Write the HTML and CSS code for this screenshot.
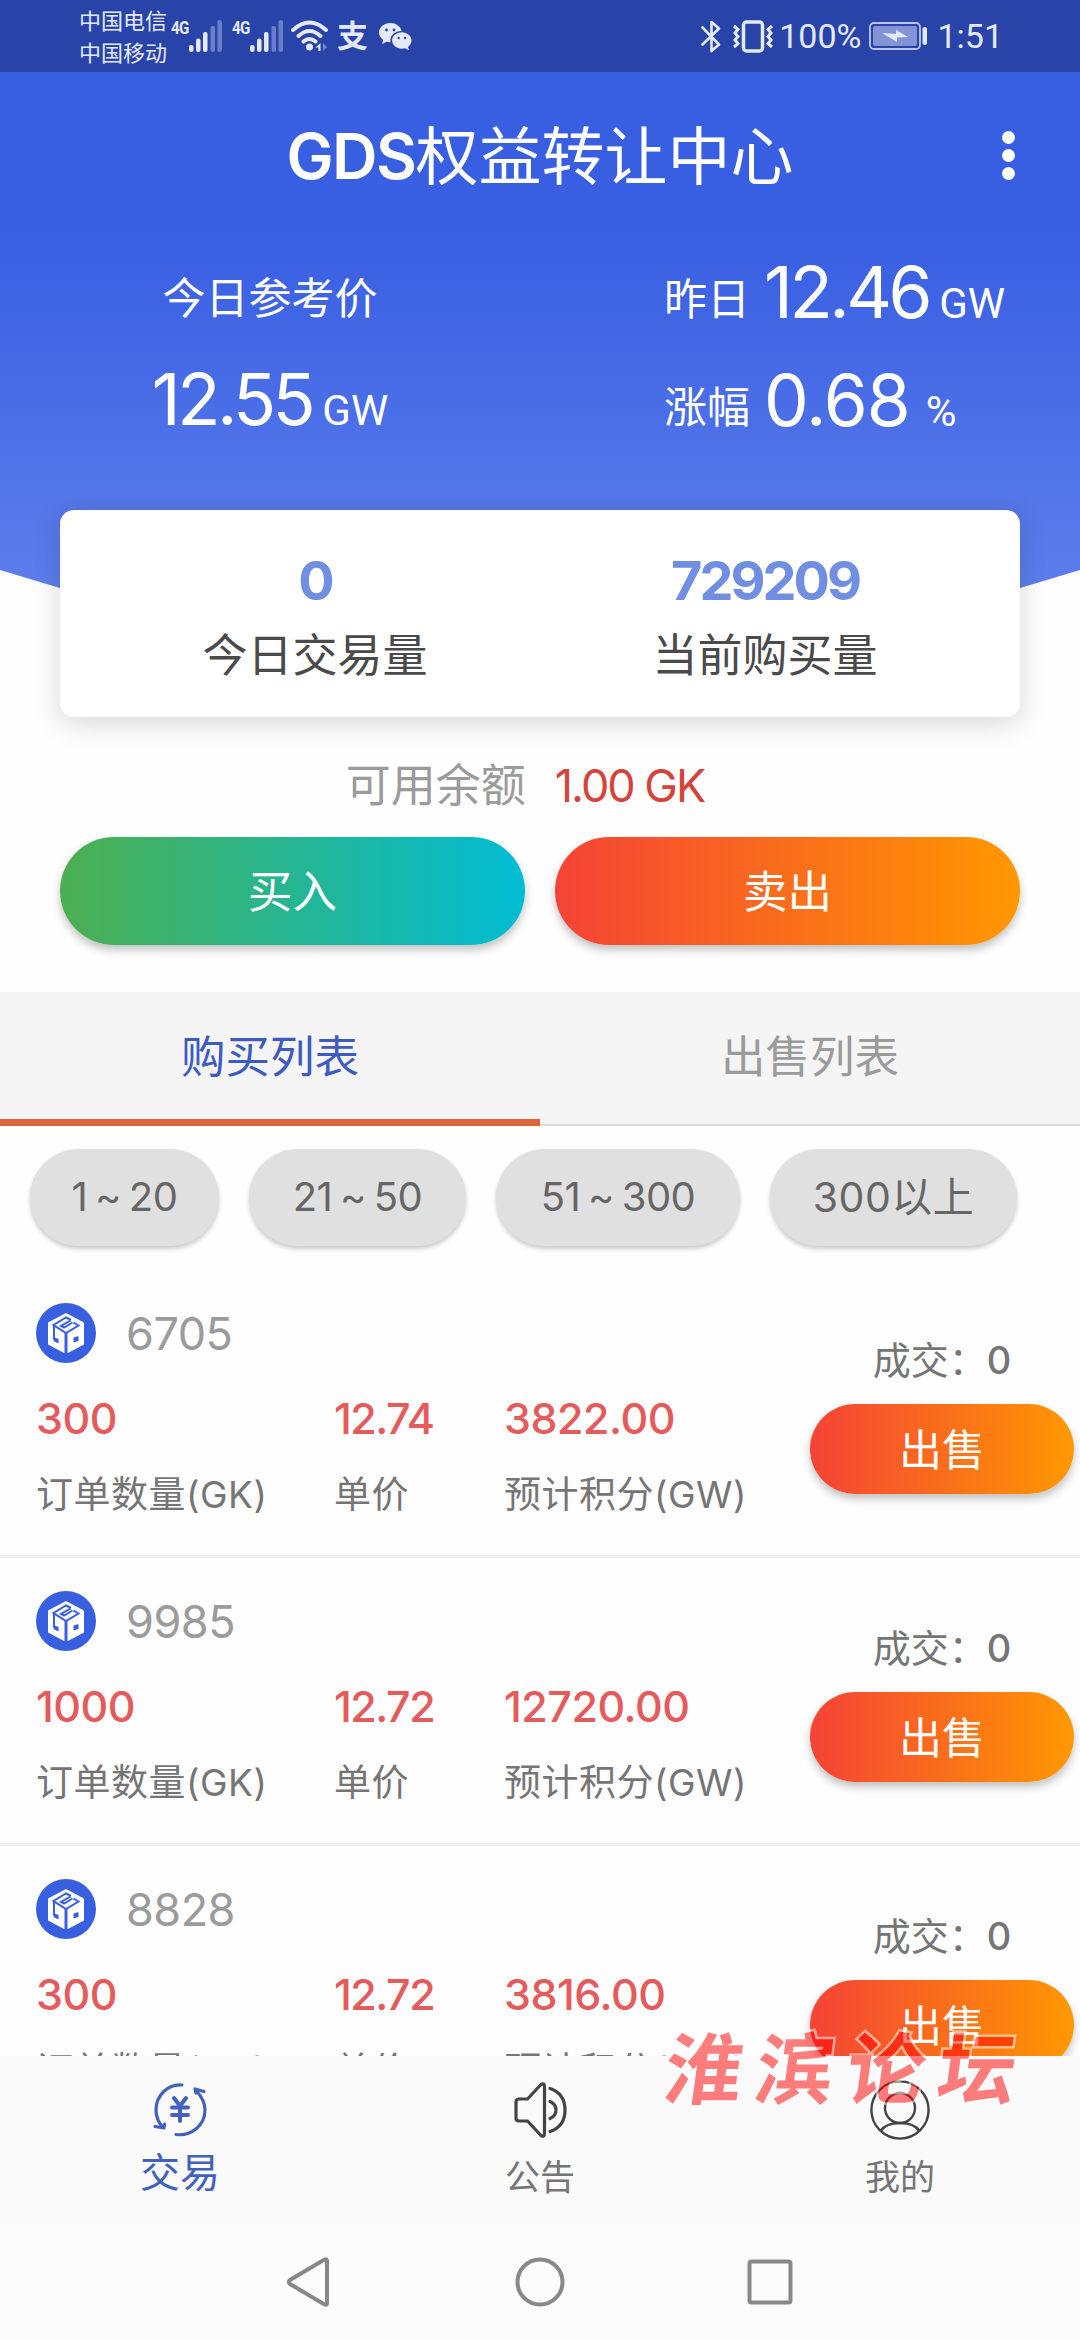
FILE: index.html
```html
<!DOCTYPE html>
<html lang="zh-CN">
  <head>
    <meta charset="UTF-8" />
    <meta name="viewport" content="width=device-width, initial-scale=1.0" />
    <title>GDS权益转让中心</title>
    <link rel="stylesheet" href="styles.css">
  </head>
  <body>
    <!-- shared icons -->
    <svg class="sprite" width="0" height="0">
      <symbol id="signal" viewBox="0 0 34 32">
        <rect x="0" y="25" width="4.500" height="7" rx="2" />
        <rect x="7" y="18.500" width="4.500" height="13.500" rx="2" />
        <rect x="14" y="12" width="4.500" height="20" rx="2" />
        <rect x="21.500" y="6" width="4.500" height="26" rx="2" opacity=".35" />
        <rect x="28.500" y="0" width="4.500" height="32" rx="2" opacity=".35" />
      </symbol>
      <symbol id="logo" viewBox="0 0 60 60">
        <circle cx="30" cy="30" r="30" fill="#375fe0" />
        <path d="M30 10l18 9.500v22L30 51l-18-9.500v-22z" fill="#fff" />
        <g fill="none" stroke="#375fe0" stroke-width="2">
          <path d="M35 17L30 14.500l-12.500 7.500 12.500 8 12.500-7.500-5-3" />
          <path d="M34.500 17.500l-9.500 5.500 3 1.500 8.500-5" />
          <path d="M18 22v14" />
        </g>
        <path d="M28.500 30h3v22h-3zM17.500 34l5 2v4.500l-5-2.500zM37.500 34.500l5-1.500v5l-5 1.500z" fill="#375fe0" />
      </symbol>
    </svg>

    <header class="hero">
      <div class="status">
        <div class="carrier"><span>中国电信</span><span>中国移动</span></div>
        <div class="sim"><b>4G</b><svg width="34" height="32"><use href="#signal" /></svg></div>
        <div class="sim"><b>4G</b><svg width="34" height="32"><use href="#signal" /></svg></div>
        <svg class="wifi" width="37" height="32" viewBox="0 0 37 32">
          <g fill="none" stroke="#e4e9fb" stroke-width="4" stroke-linecap="round">
            <path d="M2 10q16.500-15 33 0M7.500 16q11-10 22 0M12.500 21.500q6-5 12 0" />
          </g>
          <circle cx="18.500" cy="27" r="3.500" />
          <path d="M29.500 23v8h-2v-3.500h-3z" />
          <path d="M32 23v8l4-4z" opacity=".4" />
        </svg>
        <span class="pay">支</span>
        <svg class="wechat" width="33" height="28" viewBox="0 0 33 28">
          <path d="M11.500 0C5 0 0 4.300 0 9.600c0 3 1.600 5.500 4.200 7.300L3 21l4.600-2.300c1.200.3 2.500.5 3.900.5C10.500 12.500 16 8 22.700 8 21.500 3.300 17 0 11.500 0z" />
          <path d="M32.500 17.500c0-4.600-4.400-8.200-9.700-8.200s-9.700 3.600-9.700 8.200 4.400 8.200 9.700 8.200c1.200 0 2.300-.2 3.400-.5l3.800 2-1-3.300c2.200-1.600 3.500-3.800 3.500-6.400z" />
          <g fill="#2944a9"><circle cx="7.500" cy="7" r="1.400" /><circle cx="15" cy="7" r="1.400" /><circle cx="19.700" cy="15" r="1.200" /><circle cx="26" cy="15" r="1.200" /></g>
        </svg>
        <div class="status-right">
          <svg width="20" height="33" viewBox="0 0 20 33" fill="none" stroke="#e4e9fb" stroke-width="2.600" stroke-linejoin="round" stroke-linecap="round">
            <path d="M1.500 7.500l16.500 17-7.500 6.500V2l7.500 6.500-16.500 16" />
          </svg>
          <svg class="vibrate" width="42" height="33" viewBox="0 0 42 33" fill="none" stroke="#e4e9fb" stroke-width="3">
            <rect x="11.500" y="2" width="19" height="29" rx="3" stroke-width="3.500" />
            <path d="M2 6l4 3.500-3 3.500 3 3.500-3 3.500 3 3.500-4 3.500M40 6l-4 3.500 3 3.500-3 3.500 3 3.500-3 3.500 4 3.500" />
          </svg>
          <span class="percent">100%</span>
          <svg class="battery" width="58" height="28" viewBox="0 0 58 28">
            <rect x="1" y="1" width="50" height="26" rx="4" fill="none" stroke="#b9c5f2" stroke-width="1.800" />
            <rect x="4" y="4" width="44" height="20" rx="2" fill="#8294d6" />
            <path d="M13 11l14 1V8l12 7-11 .500V20z" />
            <rect x="53.500" y="5" width="4.500" height="18" rx="2" />
          </svg>
          <span>1:51</span>
        </div>
      </div>

      <div class="appbar">
        <h1><b>GDS</b>权益转让中心</h1>
        <div class="more"><i></i><i></i><i></i></div>
      </div>

      <div class="prices">
        <div class="price-left">今日参考价</div>
        <div><em>昨日</em> <strong>12.46</strong> <small>GW</small></div>
        <div class="price-left today"><strong>12.55</strong> <small>GW</small></div>
        <div><em>涨幅</em> <strong class="rate">0.68</strong> <small>%</small></div>
      </div>

      <div class="card">
        <div><b>0</b><span>今日交易量</span></div>
        <div><b>729209</b><span>当前购买量</span></div>
      </div>
    </header>

    <div class="balance"><span>可用余额</span><b>1.00 GK</b></div>

    <div class="actions">
      <a class="btn buy">买入</a>
      <a class="btn sell">卖出</a>
    </div>

    <nav class="tabs">
      <a class="active">购买列表</a>
      <a>出售列表</a>
    </nav>

    <div class="chips">
      <a>1 ~ 20</a>
      <a>21 ~ 50</a>
      <a>51 ~ 300</a>
      <a class="wide">300以上</a>
    </div>

    <main class="orders">
      <section class="order">
        <div class="info">
          <div class="user"><svg width="60" height="60"><use href="#logo" /></svg>6705</div>
          <div class="cells">
            <b>300</b><b>12.74</b><b>3822.00</b>
            <span>订单数量(GK)</span><span>单价</span><span>预计积分(GW)</span>
          </div>
        </div>
        <div class="side">
          <p>成交：<b>0</b></p>
          <a class="btn sell">出售</a>
        </div>
      </section>
      <section class="order">
        <div class="info">
          <div class="user"><svg width="60" height="60"><use href="#logo" /></svg>9985</div>
          <div class="cells">
            <b>1000</b><b>12.72</b><b>12720.00</b>
            <span>订单数量(GK)</span><span>单价</span><span>预计积分(GW)</span>
          </div>
        </div>
        <div class="side">
          <p>成交：<b>0</b></p>
          <a class="btn sell">出售</a>
        </div>
      </section>
      <section class="order">
        <div class="info">
          <div class="user"><svg width="60" height="60"><use href="#logo" /></svg>8828</div>
          <div class="cells">
            <b>300</b><b>12.72</b><b>3816.00</b>
            <span>订单数量(GK)</span><span>单价</span><span>预计积分(GW)</span>
          </div>
        </div>
        <div class="side">
          <p>成交：<b>0</b></p>
          <a class="btn sell">出售</a>
        </div>
      </section>
    </main>

    <footer class="tabbar">
      <a class="active">
        <svg width="60" height="60" viewBox="0 0 60 60" fill="none" stroke="#4260bd" stroke-width="3.200" stroke-linecap="round" stroke-linejoin="round">
          <path d="M32 5C18 4 6 15 6 30c0 7 3 13 7 17.500M5 46.500l9 1.500.5-4" />
          <path d="M26 54.500c15 2 29-9 29-24.500 0-7-3-13-8.500-19M54 11.500L45 9l1 4" />
          <path d="M24 18l6 8 6-8M30 26v15M22 27.500h16M22 35h16" stroke-width="4" />
        </svg>
        交易
      </a>
      <a>
        <svg width="60" height="60" viewBox="0 0 60 60" fill="none" stroke="#444" stroke-width="3.200" stroke-linecap="round" stroke-linejoin="round">
          <path d="M31 4.500L17.500 19H9q-3 0-3 3v16q0 3 3 3h8.500L31 55.500q3.500 2 3.500-2v-47q0-4-3.500-2z" />
          <path d="M40 8.500q15 5 15 21.500T40 51.500M40 21.500q6 2.500 6 8.500t-6 8.500" />
        </svg>
        公告
      </a>
      <a>
        <svg width="60" height="60" viewBox="0 0 60 60" fill="none" stroke="#444" stroke-width="2.400">
          <circle cx="30" cy="30" r="28.600" />
          <circle cx="30" cy="28" r="15" />
          <path d="M10.500 51Q16 43 30 43t19.500 8" />
        </svg>
        我的
      </a>
    </footer>

    <div class="sysnav">
      <svg width="50" height="50" viewBox="0 0 50 50"><path d="M42 3.500v43q0 2-2.500 1L5 27q-2.500-2 0-4L39.500 2.500q2.500-1 2.500 1z" /></svg>
      <svg width="50" height="50" viewBox="0 0 50 50"><circle cx="25" cy="25" r="22.500" /></svg>
      <svg width="50" height="50" viewBox="0 0 50 50"><rect x="4.500" y="4.500" width="41" height="41" rx="2" /></svg>
    </div>

    <div class="watermark">淮滨论坛</div>
  </body>
</html>
```

FILE: styles.css
```css
* {
  box-sizing: border-box;
}

body {
  width: 1080px;
  height: 2340px;
  margin: 0;
  position: relative;
  display: flex;
  flex-direction: column;
  overflow: hidden;
  background: #fefefe;
  color: #757575;
  font-family: Inter, "Noto Sans CJK SC", sans-serif;
}

svg {
  flex: none;
}

.sprite {
  position: absolute;
}

/* header */
.hero {
  position: relative;
  z-index: 0;
  color: #fff;
}

.hero::before {
  content: "";
  position: absolute;
  z-index: -1;
  left: 0;
  right: 0;
  top: 0;
  height: 610px;
  background: linear-gradient(#385ee2 230px, #5f80ec 610px);
  clip-path: polygon(0 0, 100% 0, 100% 570px, 1020px 588px, 940px 608px, 140px 608px, 60px 588px, 0 570px);
}

.status {
  display: flex;
  align-items: flex-start;
  height: 72px;
  padding: 0 77px 0 79px;
  background: #2944a9;
  color: #e4e9fb;
  fill: #e4e9fb;
  font-family: Roboto, "Noto Sans CJK SC", sans-serif;
}

.carrier {
  width: 92px;
  padding-top: 6px;
  font-size: 22px;
  line-height: 32px;
}

.carrier span {
  display: block;
}

.sim {
  display: flex;
  width: 61px;
  padding-top: 20px;
}

.sim b {
  width: 18px;
  font-size: 19px;
  line-height: 16px;
  letter-spacing: -1px;
  transform: scaleX(0.8);
  transform-origin: left;
}

.wifi {
  margin: 20px 9px 0 -2px;
}

.pay {
  width: 42px;
  font-size: 31px;
  font-weight: bold;
  line-height: 74px;
}

.wechat {
  margin-top: 23px;
}

.status-right {
  display: flex;
  align-items: center;
  height: 72px;
  margin-left: auto;
  font-size: 34px;
  line-height: 74px;
}

.vibrate {
  margin: 0 5px 0 11px;
}

.battery {
  margin: 0 10px 0 8px;
}

.appbar {
  position: relative;
  height: 168px;
}

h1 {
  margin: 0;
  text-align: center;
  font-size: 63px;
  font-weight: 400;
  line-height: 168px;
}

h1 b {
  font-weight: 600;
  letter-spacing: -1.5px;
}

.more {
  position: absolute;
  top: 59px;
  right: 65px;
  display: grid;
  gap: 5px;
}

.more i {
  width: 13px;
  height: 13px;
  border-radius: 50%;
  background: #fff;
}

.prices {
  display: grid;
  grid-template-columns: 540px 1fr;
  grid-template-rows: 108px 108px;
  padding-right: 20px;
  font-size: 43px;
  line-height: 108px;
  margin-top: -2px;
}

.prices > div {
  padding: 7px 0 0 124px;
  white-space: nowrap;
  word-spacing: -2px;
}

.prices .price-left {
  padding: 6px 0 0;
  text-align: center;
}

.prices .today {
  padding-top: 9px;
}

.prices em {
  margin-right: 4px;
  font-style: normal;
  vertical-align: 3px;
}

.prices strong {
  font-size: 71px;
  font-weight: 400;
  line-height: 80px;
  letter-spacing: -3.5px;
}

.prices .rate {
  margin-right: 6px;
  letter-spacing: -1px;
}

.prices small {
  font-family: Roboto, sans-serif;
  font-size: 42px;
}

.card {
  display: grid;
  grid-template-columns: 1fr 1fr;
  height: 207px;
  margin: 56px 60px 0;
  padding: 35px 30px 0;
  border-radius: 14px;
  background: #fff;
  box-shadow: 0 6px 28px rgba(0, 0, 0, 0.16);
  text-align: center;
}

.card b {
  display: block;
  color: #718fe2;
  font-size: 54px;
  line-height: 72px;
  font-weight: 700;
  letter-spacing: -3px;
}

.card span {
  display: block;
  color: #4a4a4a;
  font-size: 45px;
  line-height: 78px;
}

.balance {
  display: flex;
  justify-content: center;
  gap: 29px;
  height: 120px;
  padding: 15px 30px 0 0;
  color: #9b9b9b;
  font-size: 45px;
  line-height: 108px;
}

.balance b {
  color: #d5443b;
  font-weight: 400;
  letter-spacing: -2px;
}

.actions {
  display: flex;
  gap: 30px;
  margin: 0 60px 47px;
}

.btn {
  flex: 1;
  display: block;
  height: 108px;
  border-radius: 54px;
  color: #fff;
  font-size: 44.5px;
  line-height: 110px;
  text-align: center;
  box-shadow: 0 5px 8px rgba(0, 0, 0, 0.24);
}

.buy {
  background: linear-gradient(90deg, #4caf50, #00bcd4);
}

.sell {
  background: linear-gradient(90deg, #f44336, #ff9800);
}

.tabs {
  display: flex;
  height: 134px;
  background: #f5f5f5;
  border-bottom: 2px solid #dcdcdc;
}

.tabs a {
  flex: 1;
  height: 134px;
  color: #9b9b9b;
  font-size: 44.5px;
  line-height: 130px;
  text-align: center;
}

.tabs .active {
  color: #3d5bc0;
  border-bottom: 7px solid #df633b;
}

.chips {
  display: grid;
  grid-template-columns: 189px 217px 244px 247px;
  gap: 30px;
  padding: 23px 30px 24px;
}

.chips a {
  height: 97px;
  border-radius: 49px;
  background: #e0e0e0;
  color: #666;
  font-size: 40px;
  line-height: 96px;
  text-align: center;
  word-spacing: -3px;
  letter-spacing: -0.5px;
  box-shadow: 0 3px 4px rgba(0, 0, 0, 0.2);
}

.chips .wide {
  font-size: 41px;
  letter-spacing: 0.5px;
}

/* order list */
.orders {
  flex: 1;
  min-height: 0;
  overflow: hidden;
}

.order {
  display: flex;
  height: 288px;
  padding: 33px 6px 0 36px;
  border-bottom: 3px solid #eee;
}

.info {
  flex: 1;
}

.user {
  display: flex;
  gap: 30px;
  color: #9b9b9b;
  font-size: 45px;
  line-height: 62px;
  letter-spacing: -0.5px;
}

.cells {
  display: grid;
  grid-template-columns: 298px 170px 1fr;
  row-gap: 13px;
  margin-top: 20px;
  font-size: 37px;
  line-height: 62px;
  letter-spacing: 0.5px;
  white-space: nowrap;
}

.cells b {
  color: #e55a5a;
  font-size: 43px;
  font-weight: 500;
  line-height: 66px;
  letter-spacing: -0.5px;
}

.cells b:nth-child(2) {
  letter-spacing: -1.5px;
}

.side {
  width: 264px;
  padding-top: 27px;
}

.side p {
  margin: 0 0 14px;
  font-size: 38px;
  line-height: 60px;
  text-align: center;
}

.side p b {
  font-weight: 500;
}

.side .btn {
  height: 90px;
  font-size: 43px;
  line-height: 92px;
}

/* bottom bars */
.tabbar {
  display: flex;
  height: 167px;
  padding: 0;
  background: #fafafa;
}

.tabbar a {
  flex: 1;
  padding-top: 24px;
  font-size: 35px;
  line-height: 74px;
  text-align: center;
}

.tabbar svg {
  display: block;
  margin: 0 auto;
}

.tabbar .active {
  color: #4260bd;
  font-size: 40px;
  line-height: 66px;
}

.sysnav {
  display: flex;
  justify-content: center;
  gap: 180px;
  height: 117px;
  padding-top: 34px;
  background: #fcfcfc;
  fill: none;
  stroke: #888;
  stroke-width: 4;
}

.watermark {
  position: absolute;
  left: 665px;
  top: 2017px;
  color: #f00;
  font-family: "Liberation Serif", "Noto Sans CJK SC", serif;
  font-size: 78px;
  font-weight: bold;
  line-height: 110px;
  letter-spacing: 13px;
  opacity: 0.5;
  -webkit-text-stroke: 5px #fff;
  paint-order: stroke fill;
  transform: skewX(-8deg);
}
```
